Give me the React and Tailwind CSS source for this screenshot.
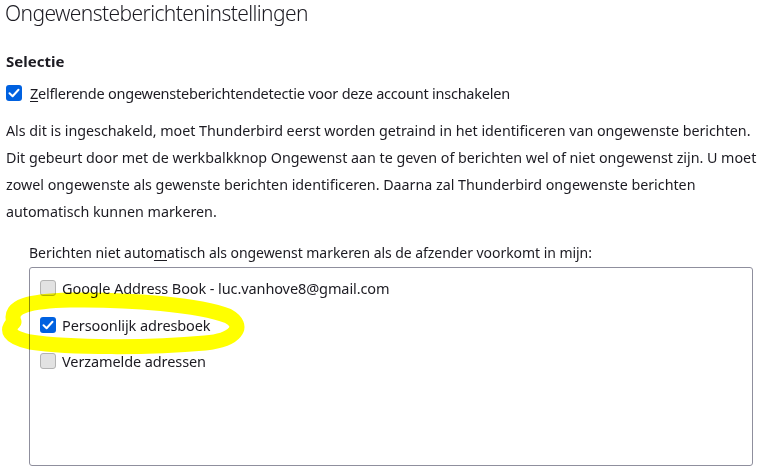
import React from "react";

const Checkbox = ({ checked }) =>
  checked ? (
    <span className="flex h-4 w-4 shrink-0 items-center justify-center rounded-[3px] bg-[#0061e0]">
      <svg viewBox="0 0 16 16" className="h-4 w-4">
        <path
          d="M3.5 8.3 L6.6 11.2 L12.5 4.8"
          fill="none"
          stroke="#fff"
          strokeWidth="2"
          strokeLinecap="round"
          strokeLinejoin="round"
        />
      </svg>
    </span>
  ) : (
    <span className="h-4 w-4 shrink-0 rounded-[3px] border border-[#b3b3b3] bg-[#e2e2e2]" />
  );

const books = [
  { label: "Google Address Book - luc.vanhove8@gmail.com", checked: false },
  { label: "Persoonlijk adresboek", checked: true },
  { label: "Verzamelde adressen", checked: false },
];

export default function App() {
  return (
    <div
      className="relative h-[473px] w-[763px] overflow-hidden bg-white text-[#1c1b22]"
      style={{ fontFamily: '"Noto Sans", "Open Sans", sans-serif' }}
    >
      {/* Page title */}
      <h1 className="pl-[5px] text-[21px] font-light leading-[26px] tracking-[-0.6px]">
        Ongewensteberichteninstellingen
      </h1>

      {/* Selectie */}
      <h2 className="mt-[25px] pl-[6px] text-[15px] font-bold leading-[20px]">Selectie</h2>

      <label className="mt-[12px] flex items-center gap-[8px] pl-[6px] text-[14.5px] leading-[20px] tracking-[-0.24px]">
        <Checkbox checked />
        <span>
          <u className="underline-offset-2">Z</u>elflerende ongewensteberichtendetectie voor deze account inschakelen
        </span>
      </label>

      <p className="mt-[14px] whitespace-nowrap pl-[6px] text-[14.3px] leading-[27px] tracking-[-0.02px]">
        Als dit is ingeschakeld, moet Thunderbird eerst worden getraind in het identificeren van ongewenste berichten.
        <br />
        Dit gebeurt door met de werkbalkknop Ongewenst aan te geven of berichten wel of niet ongewenst zijn. U moet
        <br />
        zowel ongewenste als gewenste berichten identificeren. Daarna zal Thunderbird ongewenste berichten
        <br />
        automatisch kunnen markeren.
      </p>

      {/* Whitelist */}
      <div className="mt-[18px] pl-[29px] pr-[10px]">
        <p className="text-[14px] leading-[20px] tracking-[-0.05px]">
          Berichten niet auto<u className="underline-offset-2">m</u>atisch als ongewenst markeren als de afzender voorkomt in mijn:
        </p>
        <div className="mt-[4px] flex h-[199px] flex-col gap-[16.5px] rounded-[3px] border border-[#8f8f9d] px-[10px] pt-[10px]">
          {books.map((b) => (
            <div key={b.label} className="flex items-center gap-[6px] text-[14.5px] leading-[20px] tracking-[-0.1px]">
              <Checkbox checked={b.checked} />
              <span>{b.label}</span>
            </div>
          ))}
        </div>
      </div>

      {/* Yellow marker scribble */}
      <svg
        className="pointer-events-none absolute left-0 top-0"
        width="763"
        height="473"
        viewBox="0 0 763 473"
      >
        <path
          d="M14 322 C 8 306, 30 301, 70 300 C 130 299, 200 305, 228 316 C 246 326, 236 340, 205 343 C 150 348, 70 348, 30 342 C 8 337, 6 330, 14 322"
          fill="none"
          stroke="#ffff00"
          strokeWidth="15"
          strokeLinecap="round"
          strokeLinejoin="round"
          style={{ mixBlendMode: "multiply" }}
        />
      </svg>
    </div>
  );
}
